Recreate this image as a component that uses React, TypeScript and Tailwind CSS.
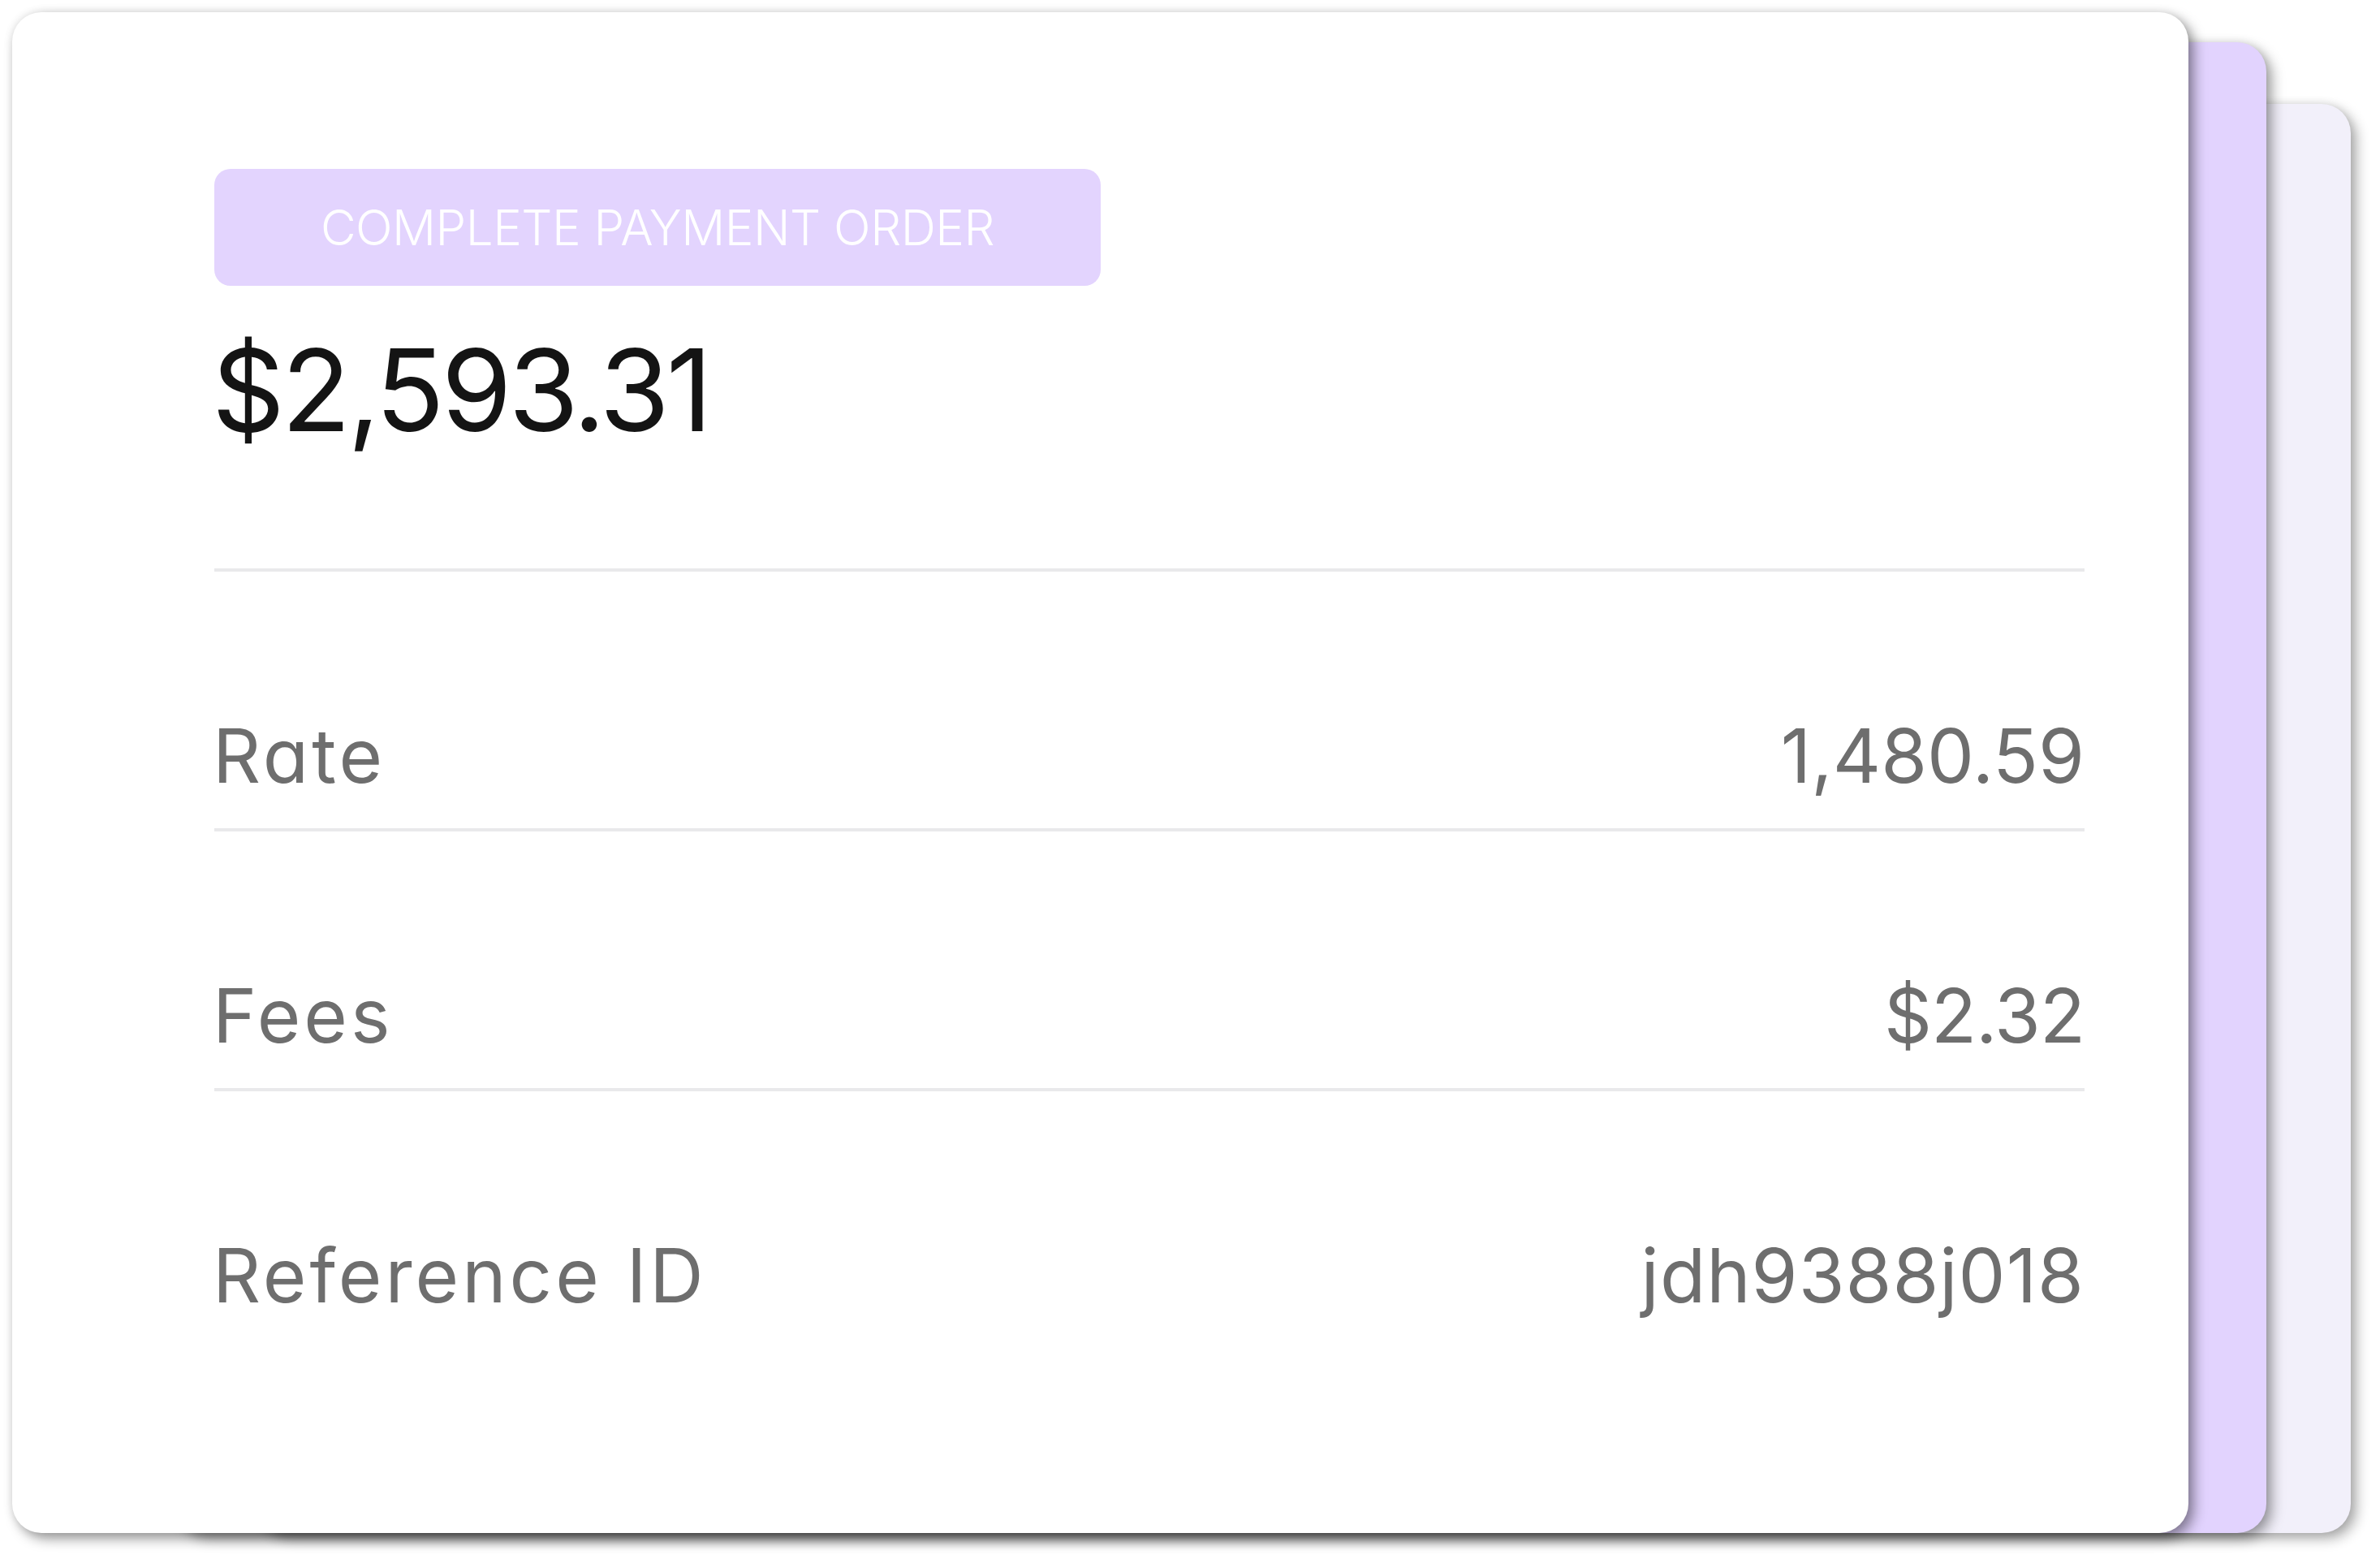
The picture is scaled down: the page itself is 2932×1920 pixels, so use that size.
import React from 'react';

const rows = [
  { label: 'Rate', value: '1,480.59', divider: true, valueClass: 'tracking-[0px]' },
  { label: 'Fees', value: '$2.32', divider: true, valueClass: 'tracking-[-1px]' },
  { label: 'Reference ID', value: 'jdh9388j018', divider: false, valueClass: 'tracking-[1px]' },
];

const PaymentCard: React.FC = () => {
  return (
    <div className="relative z-20 w-[2681px] h-full bg-white rounded-[36px] shadow-[7px_7px_16px_rgba(0,0,0,0.4),0_0_12px_rgba(0,0,0,0.1)] pt-[193px] pl-[249px] pr-[128px]">
      <div className="w-[1092px] h-[144px] rounded-[20px] bg-[#e3d4fe] flex items-center justify-center">
        <span className="text-white text-[60px] leading-none font-light tracking-[-0.5px]">COMPLETE PAYMENT ORDER</span>
      </div>

      <div className="mt-[57px] text-[140px] leading-[142px] text-[#141414] font-normal tracking-[-4px] -ml-[3px]">$2,593.31</div>

      <div className="mt-[149px] h-[4px] bg-[#e9e9eb]" />

      {rows.map((row) => (
        <div key={row.label}>
          <div className="h-[316px] flex items-end justify-between pb-[43px] text-[92px] leading-[92px] text-[#6e6e6e]">
            <span className="-ml-[2px] tracking-[4px]">{row.label}</span>
            <span className={row.valueClass}>{row.value}</span>
          </div>
          {row.divider && <div className="h-[4px] bg-[#e9e9eb]" />}
        </div>
      ))}
    </div>
  );
};

export default function App() {
  return (
    <div
      className="w-[2932px] h-[1920px] bg-white overflow-hidden pl-[15px] pt-[15px] antialiased"
      style={{ fontFamily: 'Inter, "Liberation Sans", sans-serif', fontFeatureSettings: '"cv11" 1' }}
    >
      <div className="relative w-[2881px] h-[1873px]">
        <div className="absolute top-[113px] bottom-0 left-[300px] right-0 rounded-[36px] bg-[#f2f0fa] shadow-[7px_7px_16px_rgba(0,0,0,0.32),0_0_12px_rgba(0,0,0,0.1)]" />
        <div className="absolute z-10 top-[37px] bottom-0 left-[200px] right-[104px] rounded-[36px] bg-[#e2d3fe] shadow-[7px_7px_16px_rgba(0,0,0,0.36),0_0_12px_rgba(0,0,0,0.1)]" />
        <PaymentCard />
      </div>
    </div>
  );
}
